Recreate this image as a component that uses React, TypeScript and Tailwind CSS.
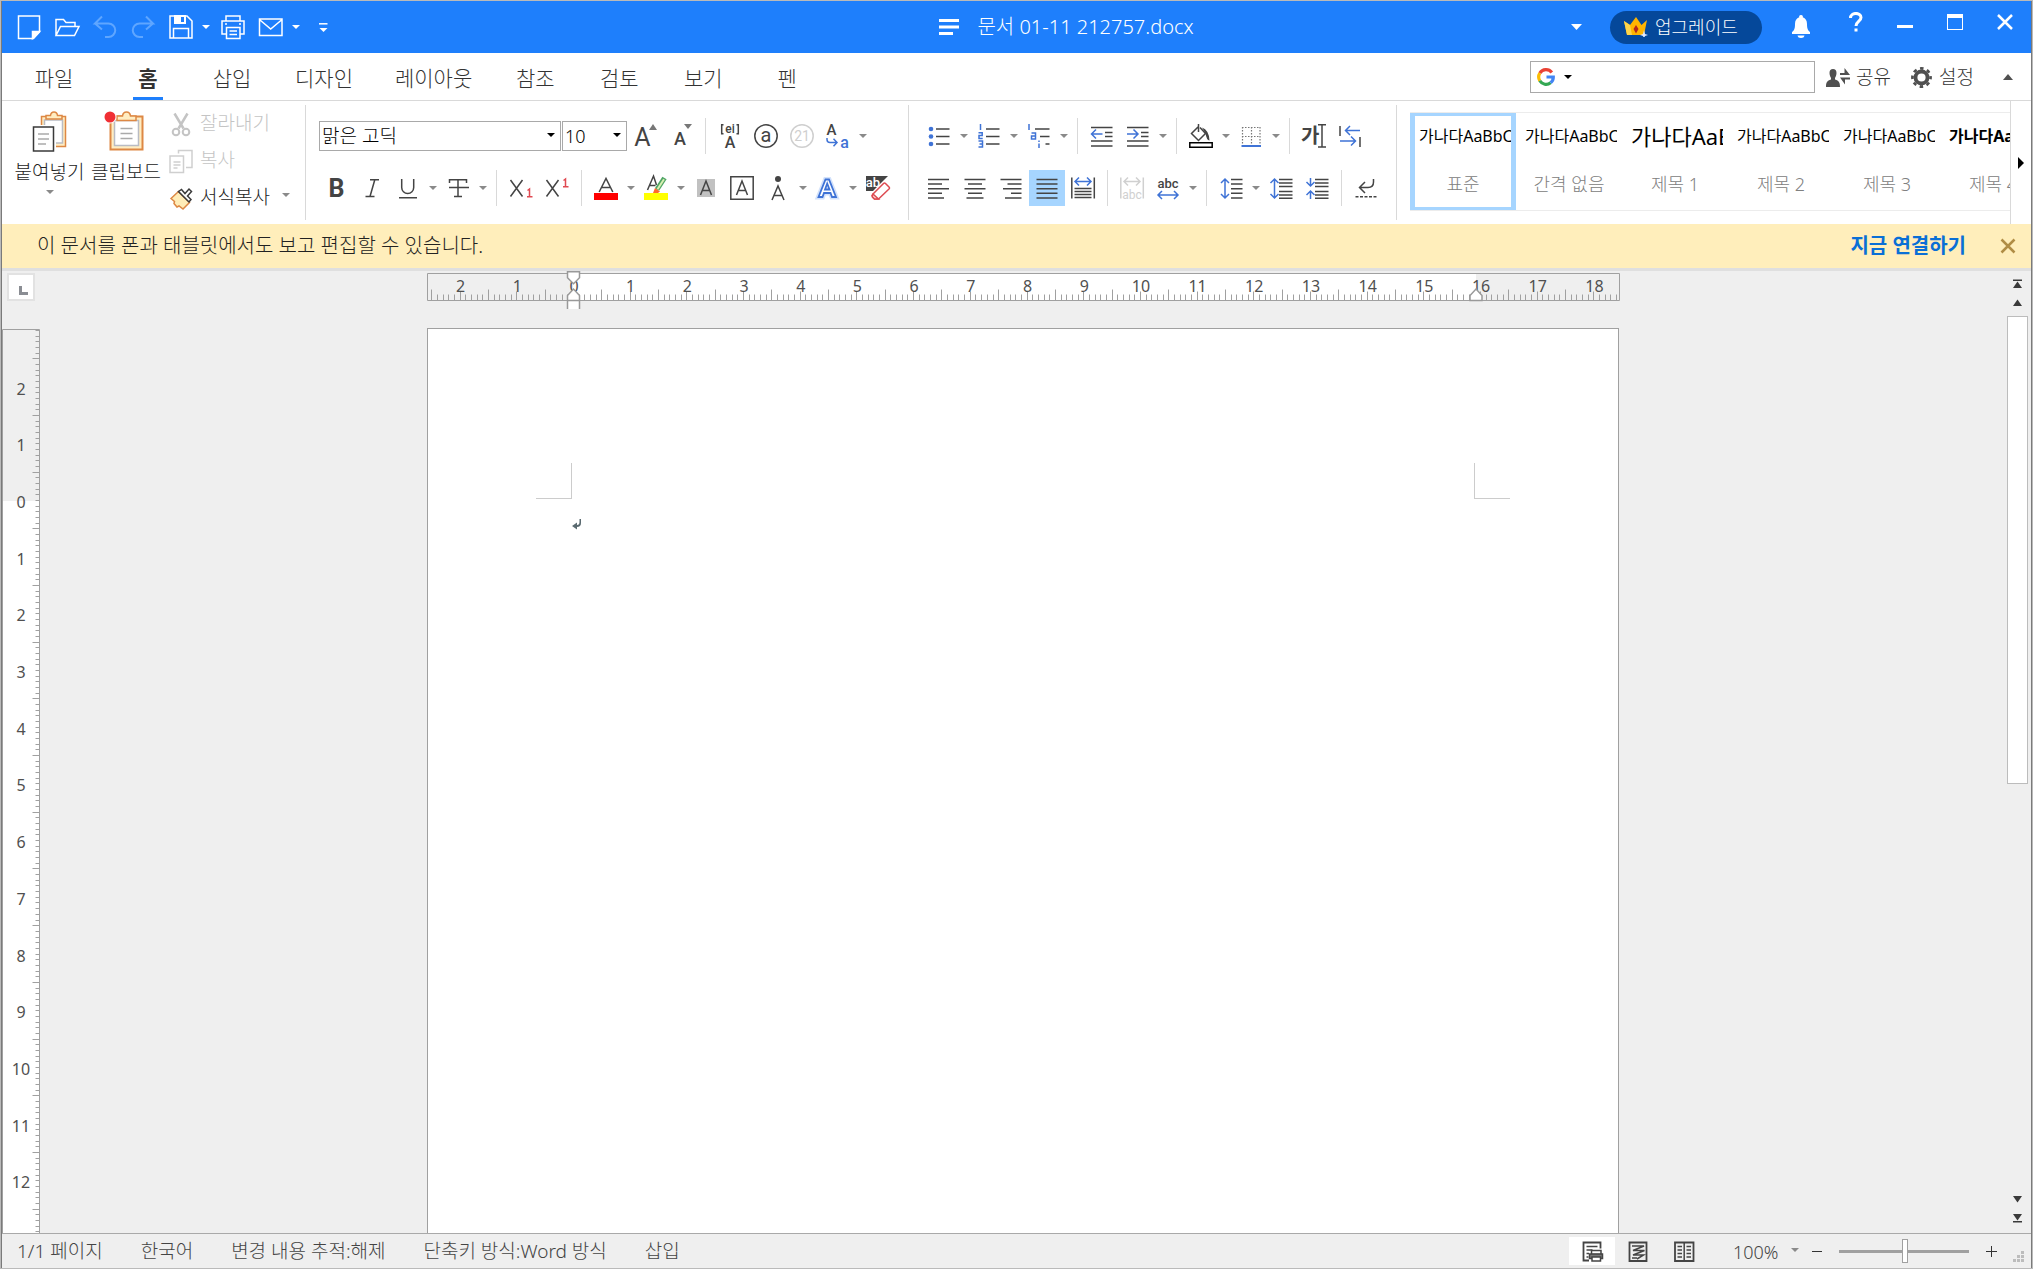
import React from 'react';

const DARK = '#444444';
const BLUE = '#3f73d6';

interface IconProps {
  children: React.ReactNode;
  color?: string;
  width?: number;
}

const Icon: React.FC<IconProps> = ({ children, color = DARK, width = 1.5 }) => (
  <svg className="size-6 shrink-0 overflow-visible" viewBox="0 0 24 24" fill="none" stroke={color} strokeWidth={width} aria-hidden="true">
    {children}
  </svg>
);

interface GlyphProps {
  x: number;
  y: number;
  size: number;
  children: string;
  color?: string;
  weight?: number;
}

const Glyph: React.FC<GlyphProps> = ({ x, y, size, children, color = DARK, weight = 400 }) => (
  <text x={x} y={y} fontSize={size} fill={color} stroke="none" fontWeight={weight} textAnchor="middle" className="font-[Roboto,sans-serif]">
    {children}
  </text>
);

const Caret: React.FC<{ className?: string }> = ({ className = 'text-[#8a8a8a]' }) => (
  <svg className={`h-1 w-2 shrink-0 ${className}`} viewBox="0 0 8 4" fill="currentColor" aria-hidden="true">
    <path d="M0 0h8L4 4z" />
  </svg>
);

const icons: Record<string, React.ReactNode> = {
  grow: (
    <Icon>
      <Glyph x={9.5} y={22} size={25}>A</Glyph>
      <path d="M16 6l4-6 4 6z" fill="#777" stroke="none" />
    </Icon>
  ),
  shrink: (
    <Icon>
      <Glyph x={11} y={21} size={18} weight={500}>A</Glyph>
      <path d="M15 0h8l-4 5z" fill="#777" stroke="none" />
    </Icon>
  ),
  phonetic: (
    <Icon>
      <path d="M5.500 .7H3.700v9h1.800M18.500.7h1.800v9h-1.800" />
      <Glyph x={12} y={9} size={12} weight={500}>ei</Glyph>
      <Glyph x={12} y={24} size={16} weight={500}>A</Glyph>
    </Icon>
  ),
  circled: (
    <Icon>
      <circle cx="12" cy="12" r="11.200" />
      <Glyph x={12} y={17.500} size={20}>a</Glyph>
    </Icon>
  ),
  circledNumber: (
    <Icon color="#cfcfcf">
      <circle cx="12" cy="12" r="11.200" />
      <Glyph x={12} y={17} size={14} color="#cfcfcf">21</Glyph>
    </Icon>
  ),
  changeCase: (
    <Icon color={BLUE}>
      <Glyph x={5.500} y={11} size={15} weight={500}>A</Glyph>
      <path d="M1 14v1.500q0 3 3 3h6.500M7.500 14.700l3.500 3.800-3.500 3.800" />
      <Glyph x={18.500} y={23.500} size={16} color={BLUE} weight={500}>a</Glyph>
    </Icon>
  ),
  bold: (
    <Icon>
      <Glyph x={12.500} y={21} size={25} weight={700}>B</Glyph>
    </Icon>
  ),
  italic: (
    <Icon>
      <path d="M10 3.700h9M5.500 20.500h9M14.800 3.700L10 20.500" />
    </Icon>
  ),
  underline: (
    <Icon>
      <path d="M5.700 3v8.500a6 6 0 0 0 12 0V3M3 21.700h18" />
    </Icon>
  ),
  strike: (
    <Icon>
      <path d="M3.500 7V3.700h17V7M12 3.700v16.800M8 20.500h8M3 11.500h20" />
    </Icon>
  ),
  subscript: (
    <Icon>
      <path d="M1.500 4l12 16.500M13.500 4l-12 16.500" />
      <path d="M18.500 14.500l2-1.500v7.500M18 20.800h5.500" stroke="#e04a52" />
    </Icon>
  ),
  superscript: (
    <Icon>
      <path d="M1.500 4l12 16.500M13.500 4l-12 16.500" />
      <path d="M18.500 4.500l2-1.500v7.500M18 10.800h5.500" stroke="#e04a52" />
    </Icon>
  ),
  fontColor: (
    <Icon>
      <path d="M5.200 16L12 2.500 18.800 16M7.500 11.500h9" />
      <path d="M0 17h24v7H0z" fill="#ff0000" stroke="none" />
    </Icon>
  ),
  highlight: (
    <Icon>
      <path d="M3.500 14L9.500 0l3 9M5.500 9.500h6" />
      <path d="M20.500 2L13 13.500" stroke="#4fa565" strokeWidth="5" />
      <path d="M20 3.200l-6.500 10" stroke="#d9f0b0" strokeWidth="2" />
      <path d="M11 12l5 3.500c-2 2-4 2.200-7 1.500z" fill="#ff6a2b" stroke="none" />
      <path d="M0 17h24v7H0z" fill="#ffff00" stroke="none" />
    </Icon>
  ),
  shadeText: (
    <Icon>
      <path d="M3 3h18v18H3z" fill="#c1c1c1" stroke="none" />
      <path d="M6.500 19L12 5l5.500 14M8.500 14.500h7" />
    </Icon>
  ),
  boxText: (
    <Icon>
      <path d="M.8.8h22.400v22.400H.8z" />
      <path d="M6.500 19L12 5l5.500 14M8.500 14.500h7" />
    </Icon>
  ),
  emphasis: (
    <Icon>
      <circle cx="12" cy="3" r="3" fill={DARK} stroke="none" />
      <path d="M6 24l6-14 6 14M8 19.500h8" />
    </Icon>
  ),
  outlineText: (
    <Icon color={BLUE}>
      <path d="M2.500 21L9.500 3.500h3.500L20 21h-4l-1.500-4H8l-1.500 4zM9 13.500h4.500L11.200 7.500z" stroke="#d3e2fb" strokeWidth="5" />
      <path d="M2.500 21L9.500 3.500h3.500L20 21h-4l-1.500-4H8l-1.500 4zM9 13.500h4.500L11.200 7.500z" fill="#fff" strokeWidth="1.800" />
    </Icon>
  ),
  clear: (
    <Icon>
      <path d="M0 0h22L7 15H0z" fill={DARK} stroke="none" />
      <Glyph x={7} y={11} size={13} color="#ffffff" weight={500}>ab</Glyph>
      <path d="M7 18L17.500 7.500q1-1 2 0l3.500 3.500q1 1 0 2L12.500 23H8.500l-2-2q-1-1.500.5-3z" fill="#fff" stroke="#dd4b52" />
      <path d="M7 18l5.500 5H8.500l-2-2q-1-1.500.5-3z" fill="#fbd3d3" stroke="#dd4b52" />
    </Icon>
  ),
  bullets: (
    <Icon>
      <path d="M9 5h13.500M9 12.500h13.500M9 20h13.500" />
      <g fill={BLUE} stroke="none">
        <circle cx="4" cy="5" r="2.300" />
        <circle cx="4" cy="12.500" r="2.300" />
        <circle cx="4" cy="20" r="2.300" />
      </g>
    </Icon>
  ),
  numbers: (
    <Icon>
      <path d="M9 5h13.500M9 12.500h13.500M9 20h13.500" />
      <path d="M3.500 0v6M1.500 8.700h3.700v2.800H2v3h3.700M1.500 17h4v6h-4M2.500 20h3" stroke={BLUE} />
    </Icon>
  ),
  multilevel: (
    <Icon>
      <path d="M8 5h14.500M13 12.500h9.500M18.500 20h4" />
      <path d="M2 0v6M4.500 9h4v6h-4v-3h4M12 16.500v1.500M12 19.500V24" stroke={BLUE} />
    </Icon>
  ),
  outdent: (
    <Icon>
      <path d="M1 3.500h21.500M15 8.500h7.500M15 12.500h7.500M1 17h21.500M1 22h21.500" />
      <path d="M12.500 10H2M6 5.500L1.500 10l4.500 4.500" stroke={BLUE} />
    </Icon>
  ),
  indent: (
    <Icon>
      <path d="M1 3.500h21.500M15 8.500h7.500M15 12.500h7.500M1 17h21.500M1 22h21.500" />
      <path d="M1 10h10.500M7.500 5.500L12 10l-4.500 4.500" stroke={BLUE} />
    </Icon>
  ),
  fill: (
    <Icon>
      <path d="M9.500 0v8M9 3L2.500 9.500l7 7 7-7L11 3.500" />
      <path d="M13 3.500q7 2.500 7.500 13-3-.500-4-7z" fill={DARK} stroke="none" />
      <path d="M.8 18.800h22.400v4.500H.8z" fill="#fff" stroke="#000" />
    </Icon>
  ),
  borders: (
    <Icon color="#777777">
      <path d="M3 3.500h18.500M3 12.500h18.500M3.500 3v18M12.500 3v18M21 3v18" strokeDasharray="1.500 1.500" strokeWidth="1.200" />
      <path d="M2.500 22h19.500" stroke={BLUE} strokeWidth="2" />
    </Icon>
  ),
  textDirection: (
    <Icon>
      <text x="-1" y="19" fontSize="20" fill={DARK} stroke="none" fontWeight={700} className="font-['Noto_Sans_CJK_KR',sans-serif]">가</text>
      <path d="M16 .8h8M16 23h8M20 1v22" />
    </Icon>
  ),
  direction: (
    <Icon>
      <path d="M2 2v10M22 13v10" />
      <path d="M22 6.500H7.500M12 2L7.500 6.500 12 11M2 17h15.500M13 12.500l4.500 4.500-4.500 4.500" stroke={BLUE} />
    </Icon>
  ),
  alignLeft: (
    <Icon>
      <path d="M1 3.500h21M1 8h14M1 12.700h21M1 17.300h14M1 22h16" />
    </Icon>
  ),
  alignCenter: (
    <Icon>
      <path d="M1.500 3.500h21M5 8h14M1.500 12.700h21M5 17.300h14M3.500 22h17" />
    </Icon>
  ),
  alignRight: (
    <Icon>
      <path d="M1.500 3.500h21M8.500 8h14M4 12.700h18.500M12 17.300h10.500M6 22h16.500" />
    </Icon>
  ),
  justify: (
    <Icon>
      <path d="M1.500 3.500h21M1.500 8h21M1.500 12.700h21M1.500 17.300h21M1.500 22h21" />
    </Icon>
  ),
  distribute: (
    <Icon>
      <path d="M.8 1.500v21M23.300 1.500v21M3.500 12.500h17M3.500 15.500h17M3.500 18.500h17M3.500 21.500h17" />
      <path d="M4 5.500h16M8 1.500l-4 4 4 4M16 1.500l4 4-4 4" stroke={BLUE} />
    </Icon>
  ),
  fitText: (
    <Icon color="#d0d0d0">
      <path d="M.8 1.500v21M23.300 1.500v21M4 5.500h16M8 1.500l-4 4 4 4M16 1.500l4 4-4 4" />
      <Glyph x={12} y={22.500} size={12} color="#d0d0d0">abc</Glyph>
    </Icon>
  ),
  charWidth: (
    <Icon color={BLUE}>
      <Glyph x={12} y={12} size={13} weight={500}>abc</Glyph>
      <path d="M2 19h20M6 15l-4 4 4 4M18 15l4 4-4 4" />
    </Icon>
  ),
  lineSpacing: (
    <Icon>
      <path d="M12 3.500h11.500M12 8h11.500M12 12.700h11.500M12 17.300h11.500M12 22h11.500" />
      <path d="M6 3v19M2 7l4-4 4 4M2 18l4 4 4-4" stroke={BLUE} />
    </Icon>
  ),
  spaceMore: (
    <Icon>
      <path d="M10 3.500h13.500M10 7h13.500M10 10.500h13.500M10 15.500h13.500M10 19h13.500M10 22.300h13.500" />
      <path d="M5.500 3v19M1.500 7l4-4 4 4M1.500 18l4 4 4-4" stroke={BLUE} />
    </Icon>
  ),
  spaceLess: (
    <Icon>
      <path d="M10 3.500h13.500M10 7h13.500M10 10.500h13.500M10 15.500h13.500M10 19h13.500M10 22.300h13.500" />
      <path d="M5.500 2v8M1.500 6l4 4 4-4M5.500 23v-8M1.500 19l4-4 4 4" stroke={BLUE} />
    </Icon>
  ),
  wrap: (
    <Icon>
      <path d="M19.500 3v3q0 5.500-5.500 5.500H5.500M11 6l-5.500 5.500L11 17" />
      <path d="M1.500 20.700h22" strokeDasharray="3 1.500" />
    </Icon>
  ),
  newDoc: (
    <Icon color="#ffffff">
      <path d="M1.500 1h21v16l-6 6.500h-15z" />
      <path d="M22.500 16.500h-7v7z" fill="#fff" />
    </Icon>
  ),
  open: (
    <Icon color="#ffffff">
      <path d="M1 20.500V4.500h7.500l2.500 3h9v4M1 20.500l4.500-9h18.500l-4.500 9z" />
    </Icon>
  ),
  undo: (
    <Icon color="#5fa6ff" width={2}>
      <path d="M9 1.500L2 8.500h13.500a6.700 6.700 0 0 1 0 13.500H12M2 8.500l7 6" />
    </Icon>
  ),
  redo: (
    <Icon color="#5fa6ff" width={2}>
      <path d="M15 1.500l7 7H8.500a6.700 6.700 0 0 0 0 13.500H12M22 8.500l-7 6" />
    </Icon>
  ),
  save: (
    <Icon color="#ffffff">
      <path d="M1 1h17l5 5v17H1zM4.500 23V13.500h15V23" />
      <path d="M5 0h12v9H5z" fill="#fff" stroke="none" />
      <path d="M12 2h3v5h-3z" fill="#1e7ffc" stroke="none" />
    </Icon>
  ),
  print: (
    <Icon color="#ffffff">
      <path d="M5 6V1h14v5M5 19H1V6h22v13h-4M5.500 12.500h13.500V23.500H5.500zM8.500 16h7.500M8.500 19.500h7.500M4 9h2M18 9h2" />
    </Icon>
  ),
  mail: (
    <Icon color="#ffffff">
      <path d="M.5 4h22.500v16.500H.5zM1 5l10.700 9L22.500 5" />
    </Icon>
  ),
  more: (
    <Icon color="#ffffff">
      <path d="M8 8.800h8.500" />
      <path d="M8.500 13h8l-4 4z" fill="#fff" stroke="none" />
    </Icon>
  ),
  pagePrint: (
    <Icon>
      <path d="M9 21.500H3.500v-18h17v6" strokeWidth="1.800" />
      <path d="M6.500 7.500h11M6.500 11h6M6.500 14.500h2.500M6.500 18h2" />
      <path d="M11.500 11.500h9.500v4h-9.500z" fill="#fff" />
      <path d="M9.500 15h13v4.500h-13z" fill="#777777" />
      <path d="M12 18h8.500v4H12z" fill="#fff" />
    </Icon>
  ),
  webView: (
    <Icon>
      <path d="M3.500 3.500h17v18.500h-17z" strokeWidth="1.800" />
      <path d="M6 7h12L7 11.500h11.500L7 16h10.500L11 20M6 19h5" />
    </Icon>
  ),
  readView: (
    <Icon>
      <path d="M3 3.500h18.500V22H3z" strokeWidth="1.800" />
      <path d="M12.200 3.500V22M5.500 7.500h4.500M5.500 11h4.500M5.500 14.500h4.500M5.500 18h4.500M14.500 7.500H19M14.500 11H19M14.500 14.500H19M14.500 18H19" />
    </Icon>
  ),
  cut: (
    <Icon color="#c4c4c4" width={2}>
      <path d="M5.500 1.500l9 15M18.500 1.500l-9 15" strokeWidth="2.500" />
      <circle cx="7" cy="20" r="3.300" />
      <circle cx="17" cy="20" r="3.300" />
    </Icon>
  ),
  copy: (
    <Icon color="#cfcfcf">
      <path d="M9.500 4.500v-3H23v17h-6M1 7h13.500v16.500H1zM4.500 13h7M4.500 16h7M4.500 19h4" />
    </Icon>
  ),
  brush: (
    <Icon color="#3a3a3a">
      <path d="M2 12.500L9.500 5.500l11 11L14 23l-4-3-2 1-3-3.500.5-2z" fill="#ffedb8" stroke="#dd8844" />
      <path d="M9.500 5.500l3-2 3.500 4 4-4.500 2.500 2.500-4 4.500 3.500 3.500-2 2.500z" fill="#fff" />
    </Icon>
  ),
};

type Tool = string | '>' | '|';

const labels: Record<string, string> = {
  bold: '굵게',
  italic: '기울임꼴',
  underline: '밑줄',
  justify: '양쪽 맞춤',
};

// '>' draws a small drop-down arrow, '|' a group divider
const fontRow1: Tool[] = ['grow', 'shrink', '|', 'phonetic', 'circled', 'circledNumber', 'changeCase', '>'];
const fontRow2: Tool[] = ['bold', 'italic', 'underline', '>', 'strike', '>', '|', 'subscript', 'superscript', '|', 'fontColor', '>', 'highlight', '>', 'shadeText', 'boxText', 'emphasis', '>', 'outlineText', '>', 'clear'];
const paraRow1: Tool[] = ['bullets', '>', 'numbers', '>', 'multilevel', '>', '|', 'outdent', 'indent', '>', '|', 'fill', '>', 'borders', '>', '|', 'textDirection', 'direction'];
const paraRow2: Tool[] = ['alignLeft', 'alignCenter', 'alignRight', 'justify', 'distribute', '|', 'fitText', 'charWidth', '>', '|', 'lineSpacing', '>', 'spaceMore', 'spaceLess', '|', 'wrap'];

const ToolRow: React.FC<{ tools: Tool[]; active?: string }> = ({ tools, active }) => (
  <>
    {tools.map((tool, i) => {
      if (tool === '|') return <span key={i} className="mx-1.5 h-9 w-px shrink-0 bg-[#d9d9d9]" />;
      if (tool === '>') {
        return (
          <button key={i} aria-label="옵션" className="flex h-9 w-3.5 shrink-0 items-center justify-center">
            <Caret />
          </button>
        );
      }
      return (
        <button
          key={i}
          aria-label={labels[tool] ?? tool}
          className={`flex size-9 shrink-0 items-center justify-center ${tool === active ? 'bg-[#a6d5ff]' : ''}`}
        >
          {icons[tool]}
        </button>
      );
    })}
  </>
);

const TitleButton: React.FC<{ name: string }> = ({ name }) => (
  <button aria-label={name} className="flex h-10 w-[38px] items-center justify-center">
    {icons[name]}
  </button>
);

const TitleCaret: React.FC = () => (
  <button aria-label="옵션" className="flex h-10 w-3.5 items-center justify-center pr-0.5">
    <Caret className="text-white" />
  </button>
);

const TitleBar: React.FC = () => (
  <header className="grid h-[52px] shrink-0 grid-cols-[1fr_auto_1fr] items-center bg-[#1e7ffc] text-white">
    <div className="flex items-center pl-2">
      {['newDoc', 'open', 'undo', 'redo', 'save'].map((name) => (
        <TitleButton key={name} name={name} />
      ))}
      <TitleCaret />
      <TitleButton name="print" />
      <TitleButton name="mail" />
      <TitleCaret />
      <TitleButton name="more" />
    </div>
    <div className="flex items-center gap-[18px] pl-[100px]">
      <svg className="h-4 w-5" viewBox="0 0 20 16" fill="#fff" aria-hidden="true">
        <path d="M0 0h20v3H0zM0 6.500h20v3H0zM0 13h14v3H0z" />
      </svg>
      <h1 className="text-[20px] whitespace-nowrap">문서 01-11 212757.docx</h1>
    </div>
    <div className="flex h-full items-center justify-end pr-[18px]">
      <button aria-label="목록" className="mr-7 flex w-3 justify-center">
        <svg className="h-1.5 w-[11px]" viewBox="0 0 11 6" fill="#fff" aria-hidden="true">
          <path d="M0 0h11L5.500 6z" />
        </svg>
      </button>
      <button className="mr-[30px] flex h-[33px] w-38 items-center gap-[7px] rounded-full bg-[#05489a] pl-3.5 text-[18px]">
        <svg className="h-5 w-6" viewBox="0 0 24 20" aria-hidden="true">
          <path d="M0 4l6 4L12 0l5.500 8L23 3l-3 15H3z" fill="#ffb400" />
          <path d="M0 4l6 4 2 10H3z" fill="#ffd54a" />
          <path d="M12 8l2.500 4L12 16.500 9.500 12z" fill="#b3261e" />
          <path d="M20 13l1 4 3 1-3 1-1 3-1-3-3-1 3-1z" fill="#dfe8ff" />
        </svg>
        업그레이드
      </button>
      <button aria-label="알림" className="mr-[39px]">
        <svg className="h-6 w-[18px]" viewBox="0 0 18 24" fill="#fff" aria-hidden="true">
          <path d="M9 0a1.800 1.800 0 0 1 1.800 2.200C13.500 3 15 5.500 15 9c0 5 1 6.500 3 8v2H0v-2c2-1.500 3-3 3-8 0-3.500 1.500-6 4.200-6.800A1.800 1.800 0 0 1 9 0zM5.500 20.500h7q-.500 2.500-3.500 2.500t-3.500-2.500z" />
        </svg>
      </button>
      <div className="mb-2.5 flex items-center">
        <button aria-label="도움말" className="mr-[34px]">
          <svg className="h-5 w-3.5" viewBox="0 0 14 20" fill="none" stroke="#fff" strokeWidth="3" aria-hidden="true">
            <path d="M1.500 6C1.500 0 12 0 12 5.500c0 4-5 4-5 8.500M7 16.500v3" />
          </svg>
        </button>
        <button aria-label="최소화" className="mr-[34px] flex h-4 w-4 items-end">
          <span className="mb-0.5 h-[3px] w-full bg-white" />
        </button>
        <button aria-label="최대화" className="mr-[34px] h-4 w-4 border border-t-4 border-white" />
        <button aria-label="닫기">
          <svg className="size-4" viewBox="0 0 16 16" stroke="#fff" strokeWidth="2.500" aria-hidden="true">
            <path d="M1 1l14 14M15 1L1 15" />
          </svg>
        </button>
      </div>
    </div>
  </header>
);

const tabs = ['홈', '삽입', '디자인', '레이아웃', '참조', '검토', '보기', '펜'];

const TabBar: React.FC = () => (
  <nav className="flex h-12 shrink-0 items-stretch border-b border-[#d9d9d9] bg-white text-[21px] text-[#333333]">
    <button className="w-[104px] pt-1">파일</button>
    {tabs.map((tab) => (
      <button key={tab} className={`flex min-w-[84px] items-stretch justify-center px-[21px] ${tab === '홈' ? 'font-bold' : ''}`}>
        <span className={`flex items-center ${tab === '홈' ? 'border-b-3 border-[#1e7ffc] px-[5px] pt-[7px]' : 'pt-1'}`}>{tab}</span>
      </button>
    ))}
    <div className="ml-auto flex items-center pr-[18px] text-[19px]">
      <div className="flex h-8 w-[285px] items-center border border-[#a9a9a9] px-1.5">
        <button aria-label="검색 엔진" className="flex items-center gap-[9px]">
          <svg className="size-[18px]" viewBox="0 0 18 18" fill="none" strokeWidth="3.200" aria-hidden="true">
            <path d="M14.800 4.500A7.300 7.300 0 0 0 2.800 5.200" stroke="#ea4335" />
            <path d="M2.800 5.200a7.300 7.300 0 0 0 0 7.600" stroke="#fbbc05" />
            <path d="M2.800 12.800a7.300 7.300 0 0 0 10.800 2" stroke="#34a853" />
            <path d="M13.600 14.800A7.300 7.300 0 0 0 16.300 9H9.500" stroke="#4285f4" />
          </svg>
          <Caret className="text-black" />
        </button>
        <input aria-label="검색" className="ml-2 min-w-0 flex-1 outline-none" />
      </div>
      <button className="ml-[11px] flex items-center gap-1.5 pt-0.5">
        <svg className="h-5 w-6" viewBox="0 0 24 20" fill="#505050" aria-hidden="true">
          <path d="M7 1c2.300 0 3.500 1.500 3.500 4S9.300 9.500 9 10v1.500c4 1 5 3 5 7.500H0c0-4.500 1-6.500 5-7.500V10c-.300-.500-1.500-2.500-1.500-5S4.700 1 7 1z" />
          <path d="M14 5h4.500V0l5.500 7H14zM24 9.500H14l5 7v-5h5z" />
        </svg>
        공유
      </button>
      <button className="ml-5 flex items-center gap-[7px] pt-0.5">
        <svg className="size-[21px]" viewBox="0 0 22 22" fill="none" stroke="#505050" aria-hidden="true">
          <circle cx="11" cy="11" r="6.300" strokeWidth="4" />
          <circle cx="11" cy="11" r="9.500" strokeWidth="2.800" strokeDasharray="3.700 3.760" strokeDashoffset="1.850" />
        </svg>
        설정
      </button>
      <button aria-label="리본 접기" className="ml-[29px]">
        <svg className="h-1.5 w-2.5" viewBox="0 0 10 6" fill="#505050" aria-hidden="true">
          <path d="M0 6h10L5 0z" />
        </svg>
      </button>
    </div>
  </nav>
);

const Clipboard: React.FC<{ paste?: boolean }> = ({ paste }) => (
  <svg className="h-[42px] w-10" viewBox={paste ? '0 0 40 42' : '2 0 40 42'} fill="none" strokeWidth="1.500" aria-hidden="true" overflow="visible">
    {paste ? (
      <>
        <path d="M11.500 5.500h24v30h-24z" fill="#ffedc2" stroke="#dd8844" />
        <path d="M14.500 9h18v23h-18z" fill="#fff" stroke="#b9bcc4" />
        <path d="M16 8V4.500h4.500q.500-3.500 3.500-3.500t3.500 3.500H32V8z" fill="#ffedc2" stroke="#dd8844" />
        <path d="M2 14h24v28H2z" fill="#fff" stroke="none" />
        <path d="M3.500 16h20v24h-20z" fill="#fff" stroke="#3a3a3a" />
        <path d="M8 23h11M8 28h11M8 33h8" stroke="#aaaaaa" />
      </>
    ) : (
      <>
        <path d="M6.500 5.500h32v33h-32z" fill="#ffedc2" stroke="#dd8844" strokeWidth="2" />
        <path d="M10.500 9.500h24v25h-24z" fill="#fff" stroke="#b9bcc4" />
        <path d="M13 9.500V5h5.500q.500-4 4-4t4 4H32v4.500z" fill="#ffedc2" stroke="#dd8844" />
        <path d="M16.500 17.500h12M16.500 22.500h12M16.500 27.500h12" stroke="#aaaaaa" />
        <circle cx="6" cy="6" r="6.500" fill="#fff" />
        <circle cx="6" cy="6" r="5.500" fill="#f02f34" />
      </>
    )}
  </svg>
);

const styleItems = [
  { name: '표준', preview: 'text-[16px] font-normal' },
  { name: '간격 없음', preview: 'text-[16px] font-normal' },
  { name: '제목 1', preview: 'text-[22px] font-normal' },
  { name: '제목 2', preview: 'text-[16px] font-normal' },
  { name: '제목 3', preview: 'text-[16px] font-normal' },
  { name: '제목 4', preview: 'text-[16px] font-bold' },
];

const Divider: React.FC = () => <span className="my-1 w-px shrink-0 bg-[#d9d9d9]" />;

const Ribbon: React.FC = () => (
  <section className="flex h-[123px] shrink-0 bg-white text-[19px] text-[#222222]">
    <div className="flex w-[303px] shrink-0 pl-2.5">
      <button className="flex w-[75px] flex-col items-center pt-2.5 leading-[19px]">
        <Clipboard paste />
        <span className="mt-2.5 whitespace-nowrap">붙여넣기</span>
        <Caret className="mt-2 text-[#8a8a8a]" />
      </button>
      <button className="flex w-[78px] flex-col items-center pt-2.5 leading-[19px]">
        <Clipboard />
        <span className="mt-2.5 whitespace-nowrap">클립보드</span>
      </button>
      <div className="flex flex-col pt-1 pl-1">
        <button className="flex h-[37px] items-center gap-[7px] text-[#c4c4c4]">{icons.cut}잘라내기</button>
        <button className="flex h-[37px] items-center gap-[7px] text-[#c4c4c4]">{icons.copy}복사</button>
        <div className="flex h-[37px] items-center gap-3">
          <button className="flex items-center gap-[7px]">{icons.brush}서식복사</button>
          <button aria-label="옵션">
            <Caret className="mb-1.5 text-[#8a8a8a]" />
          </button>
        </div>
      </div>
    </div>
    <Divider />
    <div className="flex shrink-0 flex-col gap-4 px-3 pt-[17px]">
      <div className="flex items-center">
        <div className="relative ml-px">
          <select aria-label="글꼴" className="block h-[30px] w-[242px] appearance-none border border-[#a9a9a9] bg-white pl-0.5 text-[19px] leading-7 text-black">
            <option>맑은 고딕</option>
          </select>
          <Caret className="pointer-events-none absolute top-3 right-1.5 text-black" />
        </div>
        <div className="relative ml-px">
          <select aria-label="글꼴 크기" className="block h-[30px] w-[65px] appearance-none border border-[#a9a9a9] bg-white pl-0.5 text-[18px] leading-7 text-black">
            <option>10</option>
          </select>
          <Caret className="pointer-events-none absolute top-3 right-1.5 text-black" />
        </div>
        <ToolRow tools={fontRow1} />
      </div>
      <div className="flex items-center">
        <ToolRow tools={fontRow2} />
      </div>
    </div>
    <Divider />
    <div className="flex shrink-0 flex-col gap-4 px-3 pt-[17px]">
      <div className="flex items-center">
        <ToolRow tools={paraRow1} />
      </div>
      <div className="flex items-center">
        <ToolRow tools={paraRow2} active="justify" />
      </div>
    </div>
    <Divider />
    <div className="min-w-0 flex-1 overflow-hidden pt-[11px] pl-[13px]">
      <div className="flex h-[99px] border-y border-[#ececec]">
        {styleItems.map((item, i) => (
          <button
            key={item.name}
            className={`flex w-[106px] shrink-0 flex-col items-center border-x-5 border-y-3 pt-1 ${i === 0 ? 'border-[#a6d5ff]' : 'border-transparent'}`}
          >
            <span className={`h-8 w-full overflow-hidden pl-1 text-left leading-8 whitespace-nowrap text-black ${item.preview}`}>
              가나다AaBbCc
            </span>
            <span className="mt-5 text-[18px] leading-6 whitespace-nowrap text-[#808080]">{item.name}</span>
          </button>
        ))}
      </div>
    </div>
    <button aria-label="다음 스타일" className="flex w-[21px] shrink-0 items-center justify-center border-l border-[#d9d9d9]">
      <svg className="h-3 w-1.5" viewBox="0 0 6 12" aria-hidden="true">
        <path d="M0 0v12l6-6z" />
      </svg>
    </button>
  </section>
);

const Notice: React.FC = () => (
  <div className="flex h-[47px] shrink-0 items-center border-b-3 border-[#dfdfdf] bg-[#ffeebb] pr-[15px] pl-[35px] text-[20px] text-[#222222]">
    <p>이 문서를 폰과 태블릿에서도 보고 편집할 수 있습니다.</p>
    <a href="#connect" className="mr-[34px] ml-auto font-bold text-[#0a6fd6]">
      지금 연결하기
    </a>
    <button aria-label="알림 닫기">
      <svg className="size-4" viewBox="0 0 16 16" stroke="#b08d45" strokeWidth="2.500" aria-hidden="true">
        <path d="M1.500 1.500l13 13M14.500 1.500l-13 13" />
      </svg>
    </button>
  </div>
);

const CM = 56.69;
const range = (from: number, to: number) => Array.from({ length: to - from + 1 }, (_, i) => from + i);

const HorizontalRuler: React.FC = () => {
  const zero = 146;
  const end = 1049;
  return (
    <svg className="block h-[38px] w-[1192px] shrink-0 overflow-visible font-normal" viewBox="0 0 1192 38" fill="none" stroke="#a0a0a0" aria-hidden="true">
      <path d="M.5 2.500h1192v27H.5z" fill="#efefef" />
      <path d={`M${zero} 3h${end - zero}v26H${zero}z`} fill="#fff" stroke="none" />
      {range(-25, 184).map((t) => {
        const x = Math.round(zero + (t * CM) / 10) + 0.5;
        const h = t % 10 === 0 ? 9 : t % 5 === 0 ? 11 : 6;
        return <path key={t} d={`M${x} 29.500v-${h}`} />;
      })}
      {range(-2, 18).map((n) => (
        <text key={n} x={zero + 1 + n * CM} y="21" fontSize="16" textAnchor="middle" fill="#505050" stroke="none">
          {Math.abs(n)}
        </text>
      ))}
      <g fill="#fff" strokeWidth="1.500" stroke="#999999">
        <path d="M140.500.8h12v6l-6 6-6-6z" />
        <path d="M140.500 29.500v-5l6-6.500 6 6.500v5zM140.500 38v-8.500h12V38" />
        <path d="M1043 29.500v-5l6-6.500 6 6.500v5z" />
      </g>
    </svg>
  );
};

const VerticalRuler: React.FC = () => (
  <svg className="block h-[1700px] w-[38px] font-normal" viewBox="0 0 38 1700" fill="none" stroke="#a0a0a0" aria-hidden="true">
    <path d="M.5.500h37V1700H.5z" fill="#efefef" />
    <path d="M1 172h36v1528H1z" fill="#fff" stroke="none" />
    {range(-30, 260).map((t) => {
      const y = Math.round(171 + (t * CM) / 10) + 0.5;
      return <path key={t} d={`M37.500 ${y}h-${t % 10 !== 0 && t % 5 === 0 ? 7 : 4}`} />;
    })}
    {range(-2, 12).map((n) => (
      <text key={n} x="19" y={179 + n * CM} fontSize="16" textAnchor="middle" fill="#505050" stroke="none">
        {Math.abs(n)}
      </text>
    ))}
  </svg>
);

const Arrow: React.FC<{ down?: boolean; bar?: boolean; label: string }> = ({ down, bar, label }) => (
  <button aria-label={label} className="flex h-[18px] w-full items-center justify-center">
    <svg className="h-2.5 w-[9px]" viewBox="0 0 9 10" fill="#3a3a3a" aria-hidden="true">
      <path d={down ? 'M0 1h9L4.500 7.500z' : 'M0 9h9L4.500 2.500z'} />
      {bar && <path d={down ? 'M0 8h9v1.500H0z' : 'M0 .5h9V2H0z'} />}
    </svg>
  </button>
);

const Workspace: React.FC = () => (
  <main className="flex min-h-0 flex-1 overflow-hidden bg-[#efefef]">
    <div className="flex w-[38px] shrink-0 flex-col">
      <button aria-label="탭 종류" className="mt-0.5 mb-7 ml-[5px] flex size-7 shrink-0 items-center justify-center border-2 border-[#e2e2e2] bg-white">
        <span className="mt-1.5 ml-1 size-[9px] border-b-3 border-l-3 border-[#8a8d93]" />
      </button>
      <div className="min-h-0 flex-1 overflow-hidden">
        <VerticalRuler />
      </div>
    </div>
    <div className="flex min-w-0 flex-1 flex-col items-center">
      <HorizontalRuler />
      <article className="mt-[19px] flex w-[1192px] flex-1 flex-col border border-b-0 border-[#a0a0a0] bg-white px-[108px] pt-[134px]">
        <div className="flex justify-between">
          <span className="h-9 w-9 border-r border-b border-[#cccccc]" />
          <span className="h-9 w-9 border-b border-l border-[#cccccc]" />
        </div>
        <svg className="mt-5 ml-9 h-[11px] w-2.5" viewBox="0 0 10 11" fill="#5a6a70" aria-hidden="true">
          <path d="M7.500 0H9v4q0 4-4 4v2.500L0 7l5-3.500V6q2.500 0 2.500-3z" />
        </svg>
      </article>
    </div>
    <div className="flex w-[25px] shrink-0 flex-col items-center pr-0.5">
      <div className="mt-1 flex w-full flex-col">
        <Arrow bar label="이전 페이지" />
        <Arrow label="위로" />
      </div>
      <div className="mt-[5px] mb-2 flex min-h-0 w-full flex-1 justify-center px-px">
        <span className="h-[54%] w-full border border-[#bcbcbc] bg-white" />
      </div>
      <div className="mb-1.5 flex w-full flex-col">
        <Arrow down label="아래로" />
        <Arrow down bar label="다음 페이지" />
      </div>
    </div>
  </main>
);

const StatusBar: React.FC = () => (
  <footer className="flex h-[35px] shrink-0 items-center border-t border-[#a9a9a9] bg-[#efefef] pr-1.5 pl-[15px] text-[19px] text-[#444444]">
    <div className="flex gap-[38px] whitespace-nowrap">
      <span>1/1 페이지</span>
      <span>한국어</span>
      <span>변경 내용 추적:해제</span>
      <span>단축키 방식:Word 방식</span>
      <span>삽입</span>
    </div>
    <div className="ml-auto flex items-center">
      <button aria-label="인쇄 모양" className="flex h-7 w-[46px] items-center justify-center bg-white">{icons.pagePrint}</button>
      <button aria-label="웹 모양" className="flex h-7 w-[46px] items-center justify-center">{icons.webView}</button>
      <button aria-label="읽기 모양" className="flex h-7 w-[46px] items-center justify-center">{icons.readView}</button>
      <button className="ml-[26px] flex w-[66px] items-center justify-between pt-0.5 text-[18px]">
        100%
        <Caret className="mb-1 text-[#8a8a8a]" />
      </button>
      <button aria-label="축소" className="ml-3 flex w-3 justify-center">
        <span className="h-px w-2.5 bg-[#333333]" />
      </button>
      <input
        type="range"
        aria-label="확대/축소"
        defaultValue={51}
        className="mx-4 h-6 w-[130px] appearance-none bg-transparent [&::-webkit-slider-runnable-track]:h-[3px] [&::-webkit-slider-runnable-track]:bg-[#a0a0a0] [&::-webkit-slider-thumb]:-mt-[11px] [&::-webkit-slider-thumb]:h-6 [&::-webkit-slider-thumb]:w-1.5 [&::-webkit-slider-thumb]:appearance-none [&::-webkit-slider-thumb]:border [&::-webkit-slider-thumb]:border-[#a0a0a0] [&::-webkit-slider-thumb]:bg-white"
      />
      <button aria-label="확대" className="flex w-3 justify-center">
        <svg className="size-[11px]" viewBox="0 0 11 11" stroke="#333333" aria-hidden="true">
          <path d="M0 5.500h11M5.500 0v11" />
        </svg>
      </button>
      <svg className="mt-3 ml-4 size-3" viewBox="0 0 12 12" fill="#bcbcbc" aria-hidden="true">
        <path d="M8 0h3v3H8zM8 4h3v3H8zM4 4h3v3H4zM8 8h3v3H8zM4 8h3v3H4zM0 8h3v3H0z" />
      </svg>
    </div>
  </footer>
);

export default function App() {
  return (
    <div className="h-screen border border-[#bababa] font-['Noto_Sans','Noto_Sans_CJK_KR',sans-serif] font-light">
      <div className="flex h-full flex-col overflow-hidden border-x border-[#7a7a7a]">
        <TitleBar />
        <TabBar />
        <Ribbon />
        <Notice />
        <Workspace />
        <StatusBar />
      </div>
    </div>
  );
}
